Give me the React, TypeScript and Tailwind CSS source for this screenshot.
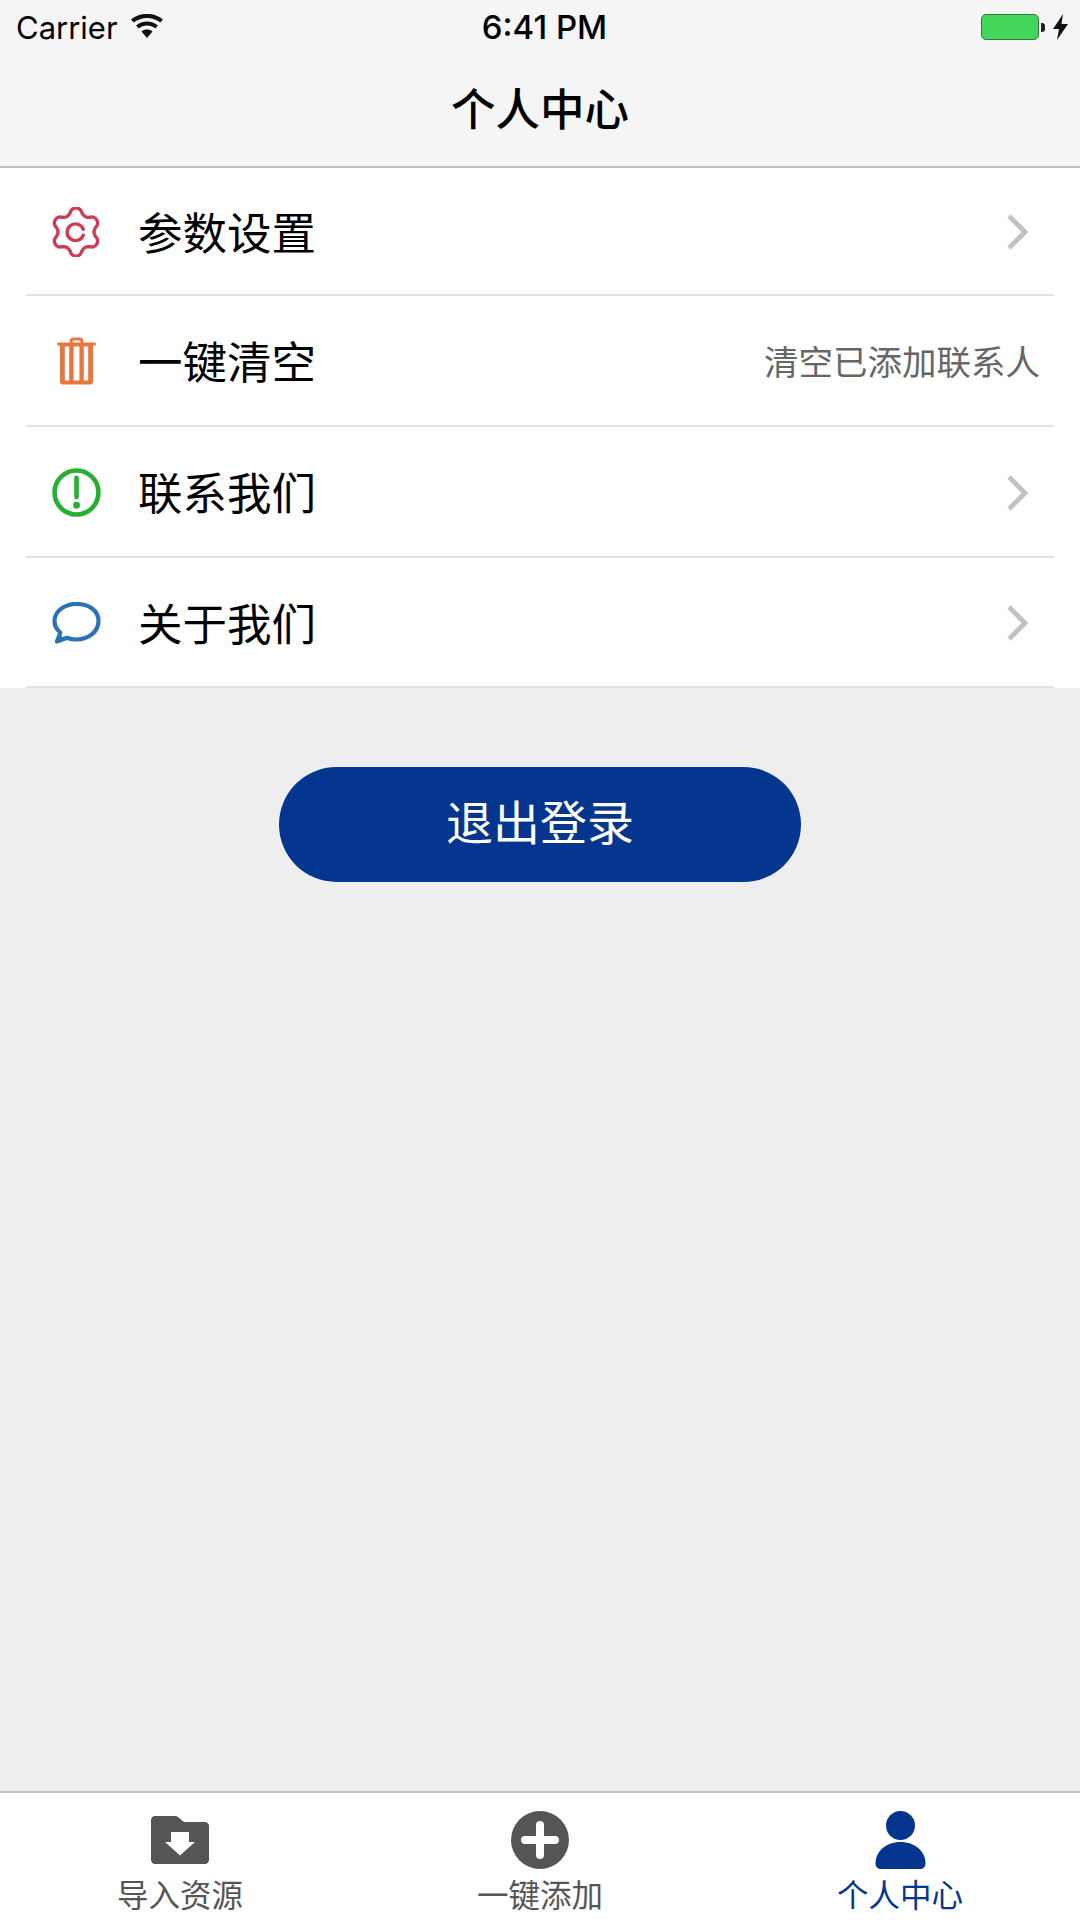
import React from "react";

const cjk = "font-['Noto_Sans_CJK_SC','Liberation_Sans',sans-serif]";

const gearPath =
  Array.from({ length: 120 }, (_, i) => {
    const t = (i / 120) * Math.PI * 2;
    const c = Math.cos(6 * t);
    const r = 20.2 + 2.9 * Math.sign(c) * Math.pow(Math.abs(c), 0.7);
    const x = 24 + r * Math.sin(t);
    const y = 24 - r * Math.cos(t);
    return `${i === 0 ? "M" : "L"}${x.toFixed(2)} ${y.toFixed(2)}`;
  }).join(" ") + " Z";

function Gear() {
  return (
    <svg width="50" height="50" viewBox="0 0 48 48" fill="none" stroke="#cf3a55" strokeWidth="3.200" strokeLinejoin="round">
      <path d={gearPath} />
      <path d="M31 21.500A8 8 0 1 0 31 27" strokeLinecap="round" />
    </svg>
  );
}

function Trash() {
  return (
    <svg width="39" height="48" viewBox="0 0 40 48" fill="#e8763f">
      <path d="M13 5V3.500C13 1.500 14.500 0 16.500 0h7C25.500 0 27 1.500 27 3.500V5h11.500c.8 0 1.500.7 1.500 1.500S39.300 8 38.500 8H37v37c0 1.700-1.300 3-3 3H6c-1.700 0-3-1.300-3-3V8H1.500C.7 8 0 7.300 0 6.500S.7 5 1.500 5H13zm3-.1h8V3h-8v1.900zM8 9v35h4.500V9H8zm9 0v35h6V9h-6zm10.500 0v35H32V9h-4.500z" fillRule="evenodd" />
    </svg>
  );
}

function Alert() {
  return (
    <svg width="49" height="49" viewBox="0 0 48 48" fill="none">
      <circle cx="24" cy="24" r="21.500" stroke="#26b02f" strokeWidth="4.500" />
      <path d="M24 9.500v19" stroke="#26b02f" strokeWidth="4.500" strokeLinecap="round" />
      <circle cx="24" cy="36.500" r="3.400" fill="#26b02f" />
    </svg>
  );
}

function Bubble() {
  return (
    <svg width="49" height="42" viewBox="0 0 48 42" fill="none">
      <path d="M24 2C11.800 2 2 9.500 2 19c0 4.500 2.200 8.500 5.800 11.500L4.500 39.500l10-3.700C17.500 37 20.700 37.500 24 37.500c12.200 0 22-8 22-18.500S36.200 2 24 2z" stroke="#2c70b8" strokeWidth="4.200" strokeLinejoin="round" />
      <path d="M4 40l2-9 6 6z" fill="#2c70b8" />
    </svg>
  );
}

function Chevron() {
  return (
    <svg width="22" height="38" viewBox="0 0 22 38" fill="none" stroke="#c2c2c2" strokeWidth="4.800">
      <path d="M3 3l16 16L3 35" />
    </svg>
  );
}

function Row({ icon, label, right, h }: { icon: React.ReactNode; label: string; right?: React.ReactNode; h: string }) {
  return (
    <div className={`flex items-center mx-[26px] border-b-2 border-[#e2e2e2] ${h}`}>
      <div className="w-[98px] flex justify-center ml-[1px] pt-[1px]">{icon}</div>
      <span className="ml-[13px] text-[44.500px] leading-none text-black">{label}</span>
      <div className="ml-auto flex items-center">{right}</div>
    </div>
  );
}

function Tab({ icon, label, color }: { icon: React.ReactNode; label: string; color: string }) {
  return (
    <div className="flex-1 flex flex-col items-center">
      <div className="h-[58px] mt-[18px] flex items-center justify-center">{icon}</div>
      <span className={`mt-[7px] text-[31.500px] leading-[34px] ${color}`}>{label}</span>
    </div>
  );
}

export default function App() {
  return (
    <div className={`w-[1080px] h-[1920px] flex flex-col bg-[#eeeeee] overflow-hidden ${cjk}`}>
      <header className="h-[168px] bg-[#f5f5f5] border-b-2 border-[#bdbdbd] flex flex-col shrink-0">
        <div className="h-[54px] relative flex items-center pl-[16px] pr-[12px] font-['Inter',sans-serif] text-[31px] text-black">
          <span className="font-normal leading-none">Carrier</span>
          <svg className="ml-[13px] mb-[2px]" width="32" height="24" viewBox="0 0 32 24" fill="#111">
            <path d="M16 24l-5.500-6.500c3-2.600 8-2.600 11 0L16 24z" />
            <path d="M7.700 14.500l-2.600-3c6-5.200 15.800-5.200 21.800 0l-2.600 3c-4.600-3.900-12-3.900-16.600 0z" />
            <path d="M2.800 8.600L0 5.500C9-2 23-2 32 5.500l-2.800 3.100C21.700 2.400 10.300 2.400 2.800 8.600z" />
          </svg>
          <span className="absolute left-0 right-0 pl-[9px] text-center text-[33px] font-medium leading-none">6:41 PM</span>
          <div className="ml-auto flex items-center">
            <div className="w-[58px] h-[26px] rounded-[5px] bg-[#43d65a] border border-[#2c7d3c]" />
            <div className="w-[4px] h-[9px] ml-[2px] bg-[#222] rounded-r-[3px]" />
            <svg className="ml-[8px]" width="15" height="26" viewBox="0 0 15 26" fill="#111">
              <path d="M10 0L0 15h6l-2 11 11-16H8.500L10 0z" />
            </svg>
          </div>
        </div>
        <div className="flex-1 flex items-center justify-center pb-[6px]">
          <span className="text-[44.500px] leading-none font-medium text-black">个人中心</span>
        </div>
      </header>

      <section className="bg-white shrink-0">
        <Row h="h-[128px]" icon={<Gear />} label="参数设置" right={<div className="mr-[26px] pt-[2px]"><Chevron /></div>} />
        <Row h="h-[131px]" icon={<Trash />} label="一键清空" right={<span className="mr-[14px] text-[34.500px] leading-none text-[#666666]">清空已添加联系人</span>} />
        <Row h="h-[131px]" icon={<Alert />} label="联系我们" right={<div className="mr-[26px] pt-[2px]"><Chevron /></div>} />
        <Row h="h-[130px]" icon={<Bubble />} label="关于我们" right={<div className="mr-[26px] pt-[2px]"><Chevron /></div>} />
      </section>

      <main className="flex-1 flex flex-col items-center pt-[79px]">
        <button className="w-[522px] h-[115px] rounded-full bg-[#05368f] text-white text-[47px] leading-none pb-[10px]">退出登录</button>
      </main>

      <nav className="h-[129px] bg-white border-t-2 border-[#c4c4c4] flex shrink-0">
        <Tab
          color="text-[#555555]"
          label="导入资源"
          icon={
            <svg width="58" height="48" viewBox="0 0 58 48" fill="#555555">
              <path fillRule="evenodd" d="M4 0h20c1.500 0 2.500.5 3.500 1.500L33 6h21c2.200 0 4 1.800 4 4v34c0 2.200-1.800 4-4 4H4c-2.200 0-4-1.800-4-4V4c0-2.200 1.800-4 4-4zm16 16v10h-6l15 13.500L44 26h-6V16H20z" />
            </svg>
          }
        />
        <Tab
          color="text-[#555555]"
          label="一键添加"
          icon={
            <svg width="58" height="58" viewBox="0 0 58 58">
              <circle cx="29" cy="29" r="29" fill="#555555" />
              <path d="M29 14v30M14 29h30" stroke="#fff" strokeWidth="8" strokeLinecap="round" />
            </svg>
          }
        />
        <Tab
          color="text-[#05368f]"
          label="个人中心"
          icon={
            <svg width="51" height="58" viewBox="0 0 50 58" fill="#05368f">
              <circle cx="25" cy="14.500" r="14.500" />
              <path d="M25 31c14 0 25 9 25 21.500 0 3-2 5.500-5 5.500H5c-3 0-5-2.500-5-5.500C0 40 11 31 25 31z" />
            </svg>
          }
        />
      </nav>
    </div>
  );
}
